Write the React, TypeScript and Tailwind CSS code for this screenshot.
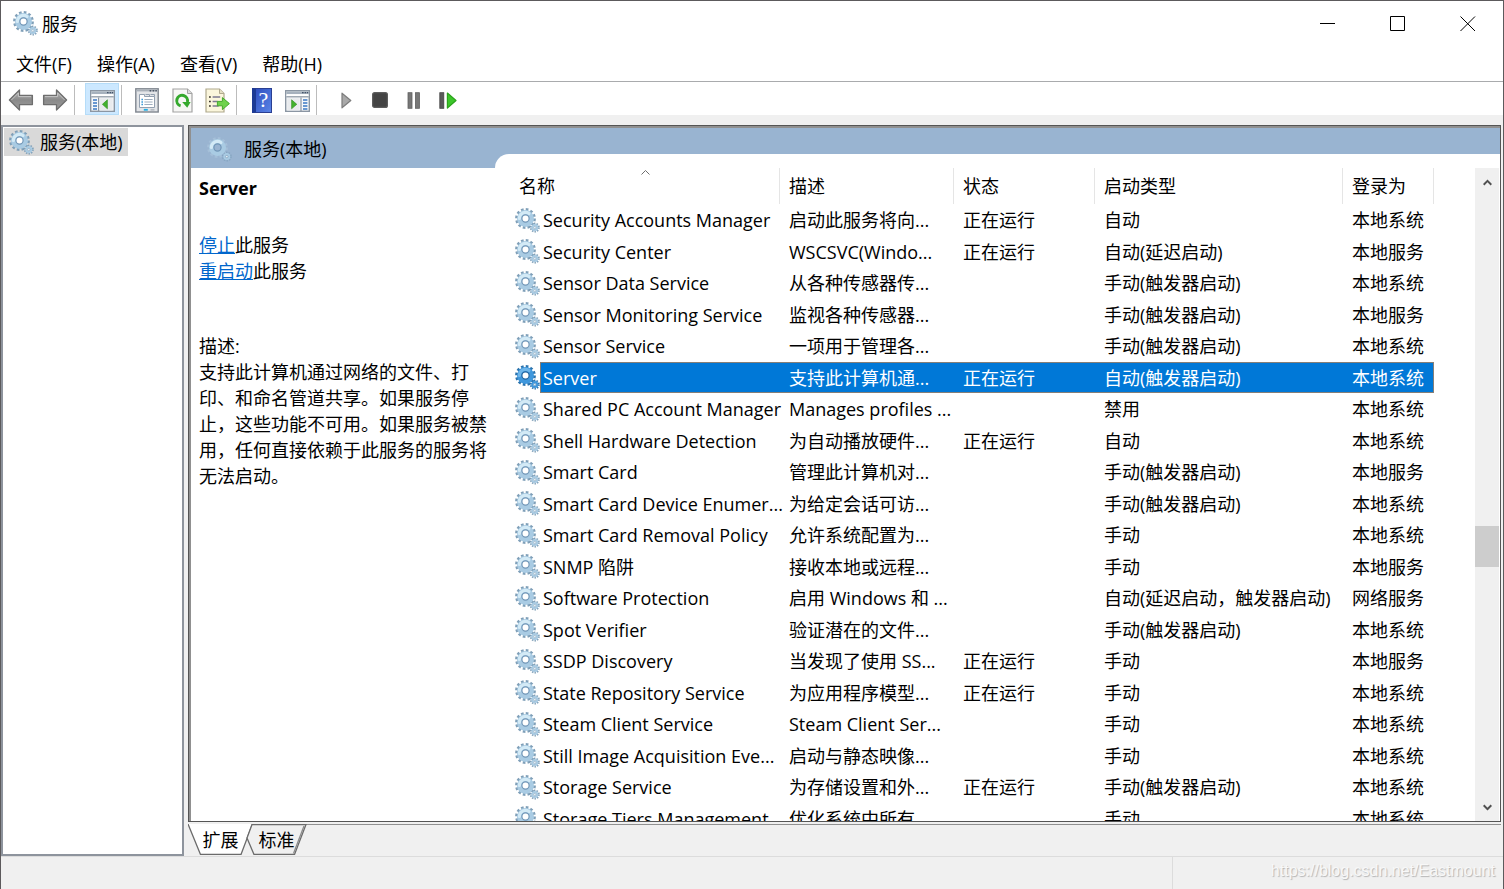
import React, { useState } from 'react';
import clsx from 'clsx';

interface Service {
  name: string;
  description: string;
  running: boolean;
  startup: string;
  logon: string;
}

const LOCAL_SYSTEM = '本地系统';
const LOCAL_SERVICE = '本地服务';
const TRIGGER = '手动(触发器启动)';

const services: Service[] = [
  { name: 'Security Accounts Manager', description: '启动此服务将向...', running: true, startup: '自动', logon: LOCAL_SYSTEM },
  { name: 'Security Center', description: 'WSCSVC(Windo...', running: true, startup: '自动(延迟启动)', logon: LOCAL_SERVICE },
  { name: 'Sensor Data Service', description: '从各种传感器传...', running: false, startup: TRIGGER, logon: LOCAL_SYSTEM },
  { name: 'Sensor Monitoring Service', description: '监视各种传感器...', running: false, startup: TRIGGER, logon: LOCAL_SERVICE },
  { name: 'Sensor Service', description: '一项用于管理各...', running: false, startup: TRIGGER, logon: LOCAL_SYSTEM },
  { name: 'Server', description: '支持此计算机通...', running: true, startup: '自动(触发器启动)', logon: LOCAL_SYSTEM },
  { name: 'Shared PC Account Manager', description: 'Manages profiles ...', running: false, startup: '禁用', logon: LOCAL_SYSTEM },
  { name: 'Shell Hardware Detection', description: '为自动播放硬件...', running: true, startup: '自动', logon: LOCAL_SYSTEM },
  { name: 'Smart Card', description: '管理此计算机对...', running: false, startup: TRIGGER, logon: LOCAL_SERVICE },
  { name: 'Smart Card Device Enumer...', description: '为给定会话可访...', running: false, startup: TRIGGER, logon: LOCAL_SYSTEM },
  { name: 'Smart Card Removal Policy', description: '允许系统配置为...', running: false, startup: '手动', logon: LOCAL_SYSTEM },
  { name: 'SNMP 陷阱', description: '接收本地或远程...', running: false, startup: '手动', logon: LOCAL_SERVICE },
  { name: 'Software Protection', description: '启用 Windows 和 ...', running: false, startup: '自动(延迟启动，触发器启动)', logon: '网络服务' },
  { name: 'Spot Verifier', description: '验证潜在的文件...', running: false, startup: TRIGGER, logon: LOCAL_SYSTEM },
  { name: 'SSDP Discovery', description: '当发现了使用 SS...', running: true, startup: '手动', logon: LOCAL_SERVICE },
  { name: 'State Repository Service', description: '为应用程序模型...', running: true, startup: '手动', logon: LOCAL_SYSTEM },
  { name: 'Steam Client Service', description: 'Steam Client Ser...', running: false, startup: '手动', logon: LOCAL_SYSTEM },
  { name: 'Still Image Acquisition Eve...', description: '启动与静态映像...', running: false, startup: '手动', logon: LOCAL_SYSTEM },
  { name: 'Storage Service', description: '为存储设置和外...', running: true, startup: TRIGGER, logon: LOCAL_SYSTEM },
  { name: 'Storage Tiers Management', description: '优化系统中所有...', running: false, startup: '手动', logon: LOCAL_SYSTEM },
];

const GearIcon = ({ selected = false, faded = false }: { selected?: boolean; faded?: boolean }) => {
  const body = selected ? '#3f97dc' : '#a9cbe3';
  const teeth = selected ? '#2b73ad' : '#7f9fb8';
  const shine = selected ? '#6fb6ea' : '#d3eaf6';
  return (
    <svg width="25" height="25" viewBox="0 0 25 25" className="block shrink-0" aria-hidden="true">
      <circle cx="10.5" cy="10.5" r="9" fill="none" stroke={faded ? '#a5bfd8' : teeth} strokeWidth="2.8" strokeDasharray="2.6 2.11" />
      <circle cx="19.8" cy="19.6" r="4" fill="none" stroke={faded ? '#86a5c2' : teeth} strokeWidth="2" strokeDasharray="1.4 1.11" />
      <circle cx="10.5" cy="10.5" r="6" fill="none" stroke={body} strokeWidth="5" />
      <path d="M4.4 10.5a6.1 6.1 0 0 1 9.5-5" fill="none" stroke={shine} strokeWidth="3.2" strokeLinecap="round" />
      <circle cx="10.5" cy="10.5" r="3.6" fill={faded ? '#99b4d1' : '#fff'} stroke={selected ? '#2465a0' : '#7297b8'} strokeWidth="1.2" />
      <circle cx="19.8" cy="19.6" r="2.5" fill="none" stroke={body} strokeWidth="2" />
      <circle cx="19.8" cy="19.6" r="1.2" fill="#e8f3fa" stroke={teeth} strokeWidth=".6" />
    </svg>
  );
};

const ArrowIcon = ({ flip = false }: { flip?: boolean }) => (
  <svg width="26" height="24" viewBox="0 0 26 24" className={clsx('block', flip && '-scale-x-100')} aria-hidden="true">
    <defs>
      <linearGradient id="arrow" x1="0" y1="0" x2="0" y2="1">
        <stop offset="0" stopColor="#b4b4b4" />
        <stop offset=".5" stopColor="#8a8a8a" />
        <stop offset="1" stopColor="#9c9c9c" />
      </linearGradient>
    </defs>
    <path d="M1.4 12 11.5 2V7.4H24.4V16.6H11.5V22Z" fill="url(#arrow)" stroke="#6e6e6e" strokeWidth="1.3" strokeLinejoin="round" />
    <path d="M3.4 12 10.4 5V8.6H23" fill="none" stroke="#c4c4c4" strokeWidth="1" />
  </svg>
);

const PaneIcon = ({ side }: { side: 'left' | 'right' }) => (
  <svg width="25" height="22" viewBox="0 0 25 22" className="mt-0.5 block" aria-hidden="true">
    <rect x=".7" y=".7" width="23.6" height="20.6" fill="#f7f8fa" stroke="#8b96a3" strokeWidth="1.4" />
    <rect x="1.4" y="1.4" width="22.2" height="2.6" fill="#a6b1bd" />
    <path d="M17 2.6h1.6M19.6 2.6h1.6M22 2.6h1.2" stroke="#43536a" strokeWidth="1.4" />
    <path d="M1.4 5.2H23.6" stroke="#fff" strokeWidth="1.2" />
    <path d="M1.4 6.8H23.6" stroke="#8b96a3" strokeWidth="1.2" />
    {side === 'left' ? (
      <>
        <path d="M8.6 7.4V21" stroke="#8b96a3" strokeWidth="1.2" />
        <path d="M3 10h4M3 13h4M3 16h4M3 19h4" stroke="#3c78c4" strokeWidth="1.3" />
        <rect x="10" y="8.2" width="12.6" height="12.2" fill="#e9ebee" />
        <path d="M17.4 9.8v9L12.4 14.3Z" fill="#43b22e" stroke="#2c8c1c" strokeWidth=".6" />
      </>
    ) : (
      <>
        <path d="M16 7.4V21" stroke="#8b96a3" strokeWidth="1.2" />
        <path d="M18 10h4.4M18 13h4.4M18 16h4.4M18 19h4.4" stroke="#3c78c4" strokeWidth="1.3" />
        <rect x="2.2" y="8.2" width="12.4" height="12.2" fill="#e9ebee" />
        <path d="M6.6 9.8v9L11.8 14.3Z" fill="#43b22e" stroke="#2c8c1c" strokeWidth=".6" />
      </>
    )}
  </svg>
);

const PropertiesIcon = () => (
  <svg width="24" height="25" viewBox="0 0 24 25" className="block" aria-hidden="true">
    <rect x=".8" y=".8" width="22.4" height="23.2" fill="#e3e5e8" stroke="#7f868f" strokeWidth="1.4" />
    <path d="M1.5 2.6h21" stroke="#a9b0b8" strokeWidth="1.6" />
    <path d="M14.6 2.8h1.6M17.6 2.8h1.6M20.4 2.8h1.4" stroke="#4a5564" strokeWidth="1.4" />
    <path d="M4.5 6.5H9.5V8.5H19.5V19.5H4.5Z" fill="#fff" stroke="#93a0b0" />
    <path d="M10.5 6.5h4v2M15.5 6.5h4v2" fill="none" stroke="#93a0b0" />
    <path d="M6.4 11.5h1.6M6.4 14h1.6M6.4 16.5h1.6" stroke="#3c9bd8" strokeWidth="1.3" />
    <path d="M9.4 11.5h8.2M9.4 14h8.2M9.4 16.5h8.2" stroke="#9fadbd" strokeWidth="1.1" />
    <path d="M8.8 21.8h4" stroke="#1fb0e6" strokeWidth="1.8" />
    <path d="M15.5 21.8h4" stroke="#b6bcc4" strokeWidth="1.8" />
  </svg>
);

const RefreshIcon = () => (
  <svg width="21" height="25" viewBox="0 0 21 25" className="block" aria-hidden="true">
    <path d="M1 1H15.5L20 5.5V24H1Z" fill="#f7f7f5" stroke="#a3a3a3" strokeWidth="1.2" />
    <path d="M15.5 1V5.5H20" fill="#dcdcdc" stroke="#a3a3a3" />
    <path d="M8.6 17.9A5.4 5.4 0 1 1 15.4 14" fill="none" stroke="#35a92d" strokeWidth="3" />
    <path d="M10.2 14H18.6L15.2 19.8Z" fill="#35a92d" />
  </svg>
);

const ExportIcon = () => (
  <svg width="25" height="25" viewBox="0 0 25 25" className="block" aria-hidden="true">
    <path d="M1 1H14.5L19 5.5V24H1Z" fill="#fbf6dc" stroke="#b0a98e" strokeWidth="1.2" />
    <path d="M14.5 1V5.5H19" fill="#e6e0c4" stroke="#b0a98e" />
    <path d="M4 9h1.8M4 13.5h1.8M4 18h1.8" stroke="#39342c" strokeWidth="1.6" />
    <path d="M7.6 9h7.6M7.6 13.5h5M7.6 18h6" stroke="#7e7a90" strokeWidth="1.3" />
    <path d="M12.4 13.4h5V9.6l7 6-7 6V17.8h-5Z" fill="#6fd24c" stroke="#45a92c" />
  </svg>
);

const HelpIcon = () => (
  <span className="flex h-[25px] w-5 items-center justify-center border border-[#2a3f92] border-l-4 border-l-[#1c3a94] bg-linear-to-br from-[#2f4fc0] to-[#5b84e6] font-['Liberation_Serif',serif] text-[22px] leading-6 text-white">
    ?
  </span>
);

const PlayIcon = () => (
  <svg width="11" height="17" viewBox="0 0 11 17" className="block" aria-hidden="true">
    <path d="M1 1.2 9.8 8.5 1 15.8Z" fill="#a9a9a9" stroke="#7d7d7d" strokeWidth="1.2" strokeLinejoin="round" />
  </svg>
);

const StopIcon = () => (
  <svg width="16" height="16" viewBox="0 0 16 16" className="block" aria-hidden="true">
    <rect x=".6" y=".6" width="14.8" height="14.8" rx="2" fill="#444" stroke="#5e5e5e" strokeWidth="1.2" />
  </svg>
);

const PauseIcon = () => (
  <svg width="14" height="17" viewBox="0 0 14 17" className="block" aria-hidden="true">
    <rect x="1" y=".7" width="4" height="15.6" fill="#777" stroke="#606060" strokeWidth=".8" />
    <rect x="8.4" y=".7" width="4" height="15.6" fill="#777" stroke="#606060" strokeWidth=".8" />
  </svg>
);

const RestartIcon = () => (
  <svg width="18" height="17" viewBox="0 0 18 17" className="block" aria-hidden="true">
    <rect x=".8" y=".7" width="4" height="15.6" fill="#5a5a5a" stroke="#444" strokeWidth=".8" />
    <path d="M8.4 1 17 8.5 8.4 16Z" fill="#3cc62a" stroke="#2ba31b" strokeWidth="1.2" strokeLinejoin="round" />
  </svg>
);

const ToolButton = ({ label, active, children }: { label: string; active?: boolean; children: React.ReactNode }) => (
  <button
    type="button"
    aria-label={label}
    className={clsx('flex h-8 w-[34px] items-center justify-center pt-0.5', active && 'bg-[#cce8ff] outline outline-[#b5dcf8] -outline-offset-1')}
  >
    {children}
  </button>
);

const Separator = () => <div className="mr-2 ml-0.5 h-[30px] w-px bg-[#bcbcbc]" />;

const WindowButton = ({ label, d }: { label: string; d: string }) => (
  <button type="button" aria-label={label} className="flex w-[70px] items-center justify-center">
    <svg width="16" height="16" viewBox="0 0 16 16" fill="none" stroke="#000" aria-hidden="true">
      <path d={d} />
    </svg>
  </button>
);

const menus = ['文件(F)', '操作(A)', '查看(V)', '帮助(H)'];

const ServicesWindow = () => {
  const [selected, setSelected] = useState('Server');
  const [tab, setTab] = useState('扩展');

  return (
    <div className="flex h-screen flex-col overflow-hidden border-x border-t border-[#5c5a5c] bg-[#f0f0f0] font-['Open_Sans','Noto_Sans_CJK_SC',sans-serif] text-[18px] leading-6 text-black">
      <header className="flex h-[45px] shrink-0 items-stretch bg-white">
        <h1 className="flex flex-1 items-center gap-1 pl-3">
          <GearIcon />
          服务
        </h1>
        <WindowButton label="最小化" d="M0 7.5H15" />
        <WindowButton label="最大化" d="M.5 .5H14.5V14.5H.5Z" />
        <WindowButton label="关闭" d="M.5 .5 15 15M15 .5 .5 15" />
      </header>

      <nav className="flex h-9 shrink-0 items-center gap-px border-b border-[#a9abad] bg-white pl-[3px]">
        {menus.map(menu => (
          <button key={menu} type="button" className="px-3">
            {menu}
          </button>
        ))}
      </nav>

      <div className="flex h-[33px] shrink-0 items-end bg-white pl-[3px]">
        <ToolButton label="后退"><ArrowIcon /></ToolButton>
        <ToolButton label="前进"><ArrowIcon flip /></ToolButton>
        <Separator />
        <div className="pl-0.5">
          <ToolButton label="显示/隐藏控制台树" active><PaneIcon side="left" /></ToolButton>
        </div>
        <Separator />
        <div className="flex gap-px">
          <ToolButton label="属性"><PropertiesIcon /></ToolButton>
          <ToolButton label="刷新"><RefreshIcon /></ToolButton>
          <ToolButton label="导出列表"><ExportIcon /></ToolButton>
        </div>
        <Separator />
        <div className="flex gap-px">
          <ToolButton label="帮助"><HelpIcon /></ToolButton>
          <ToolButton label="显示/隐藏操作窗格"><PaneIcon side="right" /></ToolButton>
        </div>
        <Separator />
        <div className="flex pl-1">
          <ToolButton label="启动服务"><PlayIcon /></ToolButton>
          <ToolButton label="停止服务"><StopIcon /></ToolButton>
          <ToolButton label="暂停服务"><PauseIcon /></ToolButton>
          <ToolButton label="重启动服务"><RestartIcon /></ToolButton>
        </div>
      </div>

      <main className="flex min-h-0 flex-1 gap-1 pt-[10px] pr-0.5">
        <aside className="w-[183px] shrink-0 border-2 border-[#8e949d] bg-white p-px">
          <button type="button" className="flex h-7 items-center gap-[6px] bg-[#d9d9d9] px-[5px]">
            <GearIcon />
            服务(本地)
          </button>
        </aside>

        <div className="flex min-w-0 flex-1 flex-col">
          <section className="flex min-h-0 flex-1 flex-col border border-[#555] bg-white">
            <div className="flex min-h-0 flex-1 flex-col border-t-2 border-l-2 border-[#909090]">
              <div className="flex h-10 shrink-0">
                <h2 className="flex w-[304px] items-center gap-3 bg-[#99b4d1] pt-0.5 pl-4">
                  <GearIcon faded />
                  服务(本地)
                </h2>
                <div className="flex flex-1 flex-col justify-end bg-[#99b4d1]">
                  <div className="h-[14px] rounded-tl-[14px] bg-white" />
                </div>
              </div>

              <div className="flex min-h-0 flex-1">
                <article className="w-[319px] shrink-0 pt-2 pl-2">
                  <h3 className="font-['Noto_Sans',sans-serif] font-bold">Server</h3>
                  <div className="w-[290px] pt-8 leading-[26px]">
                    <p>
                      <a href="#stop" className="text-[#0066cc] underline">停止</a>此服务
                    </p>
                    <p>
                      <a href="#restart" className="text-[#0066cc] underline">重启动</a>此服务
                    </p>
                    <div className="pt-[49px]">
                      <p>描述:</p>
                      <p>
                        支持此计算机通过网络的文件、打印、和命名管道共享。如果服务停止，这些功能不可用。如果服务被禁用，任何直接依赖于此服务的服务将无法启动。
                      </p>
                    </div>
                  </div>
                </article>

                <div className="min-w-0 flex-1 overflow-hidden">
                  <table className="w-[924px] table-fixed border-separate border-spacing-0 text-left whitespace-nowrap">
                    <colgroup>
                      <col className="w-[30px]" />
                      <col className="w-[240px]" />
                      <col className="w-[174px]" />
                      <col className="w-[141px]" />
                      <col className="w-[248px]" />
                      <col className="w-[91px]" />
                    </colgroup>
                    <thead>
                      <tr className="h-9 *:border-r *:border-[#e5e5e5] *:p-0 *:pl-[9px] *:font-normal">
                        <th colSpan={2} className="relative">
                          名称
                          <svg width="9" height="5" viewBox="0 0 9 5" className="absolute top-0.5 left-[131px]" fill="none" stroke="#6d6d6d" aria-hidden="true">
                            <path d="M.5 4.5l4-4 4 4" />
                          </svg>
                        </th>
                        <th>描述</th>
                        <th>状态</th>
                        <th>启动类型</th>
                        <th>登录为</th>
                      </tr>
                    </thead>
                    <tbody>
                      {services.map(service => {
                        const active = service.name === selected;
                        const highlight = active && 'border-y border-[#857f78] bg-[#0078d7] text-white';
                        const cell = clsx('p-0 pl-[9px]', highlight);
                        return (
                          <tr key={service.name} onClick={() => setSelected(service.name)} className="odd:h-8 even:h-[31px]">
                            <td className="p-0 pl-[5px]"><GearIcon selected={active} /></td>
                            <td className={clsx('p-0', highlight, active ? 'border-l pl-[2px]' : 'pl-[3px]')}>{service.name}</td>
                            <td className={cell}>{service.description}</td>
                            <td className={cell}>{service.running && '正在运行'}</td>
                            <td className={cell}>{service.startup}</td>
                            <td className={clsx(cell, active && 'border-r')}>{service.logon}</td>
                          </tr>
                        );
                      })}
                    </tbody>
                  </table>
                </div>

                <div className="mr-px flex w-6 shrink-0 flex-col bg-[#f0f0f0]">
                  <button type="button" aria-label="向上滚动" className="flex h-7 items-center justify-center">
                    <svg width="9" height="7" viewBox="0 0 9 7" fill="none" stroke="#505050" strokeWidth="2" aria-hidden="true">
                      <path d="M.7 5.7 4.5 1.9l3.8 3.8" />
                    </svg>
                  </button>
                  <div className="grow-[331]" />
                  <div className="h-[41px] bg-[#cdcdcd]" />
                  <div className="grow-[226]" />
                  <button type="button" aria-label="向下滚动" className="flex h-7 items-center justify-center">
                    <svg width="9" height="7" viewBox="0 0 9 7" fill="none" stroke="#505050" strokeWidth="2" aria-hidden="true">
                      <path d="M.7 1.3 4.5 5.1l3.8-3.8" />
                    </svg>
                  </button>
                </div>
              </div>
            </div>
          </section>

          <div className="mt-0.5 flex h-8 shrink-0 border-t border-[#909090]">
            <button type="button" onClick={() => setTab('扩展')} aria-pressed={tab === '扩展'} className="relative -mt-px w-[65px]">
              <svg width="65" height="31" viewBox="0 0 65 31" className="absolute top-0 left-0" aria-hidden="true">
                <path d="M0 0 12.5 30.5H53L64.5 0" fill="#fff" stroke="#6b6b6b" strokeWidth="1.3" />
              </svg>
              <span className="relative">扩展</span>
            </button>
            <button type="button" onClick={() => setTab('标准')} aria-pressed={tab === '标准'} className="relative -mt-px -ml-[7px] w-[61px]">
              <svg width="61" height="31" viewBox="0 0 61 31" className="absolute top-0 left-0" aria-hidden="true">
                <path d="M6 .5H60L48.5 30.5H8L1 14Z" fill="#f0f0f0" stroke="#6b6b6b" strokeWidth="1.3" />
                <path d="M58 2 47.5 29.5" stroke="#8c8c8c" strokeWidth="1.3" />
              </svg>
              <span className="relative">标准</span>
            </button>
          </div>
        </div>
      </main>

      <footer className="flex h-[33px] shrink-0 justify-end border-t border-[#dcdcdc]">
        <div className="flex w-[331px] items-center justify-end border-l border-[#dcdcdc] pr-2 pb-1 font-['Liberation_Sans',sans-serif] text-[16px] whitespace-nowrap text-[#f8f8f8] [text-shadow:1px_1px_1px_#b4b4b4]">
          https://blog.csdn.net/Eastmount
        </div>
      </footer>
    </div>
  );
};

export default function App() {
  return <ServicesWindow />;
}
